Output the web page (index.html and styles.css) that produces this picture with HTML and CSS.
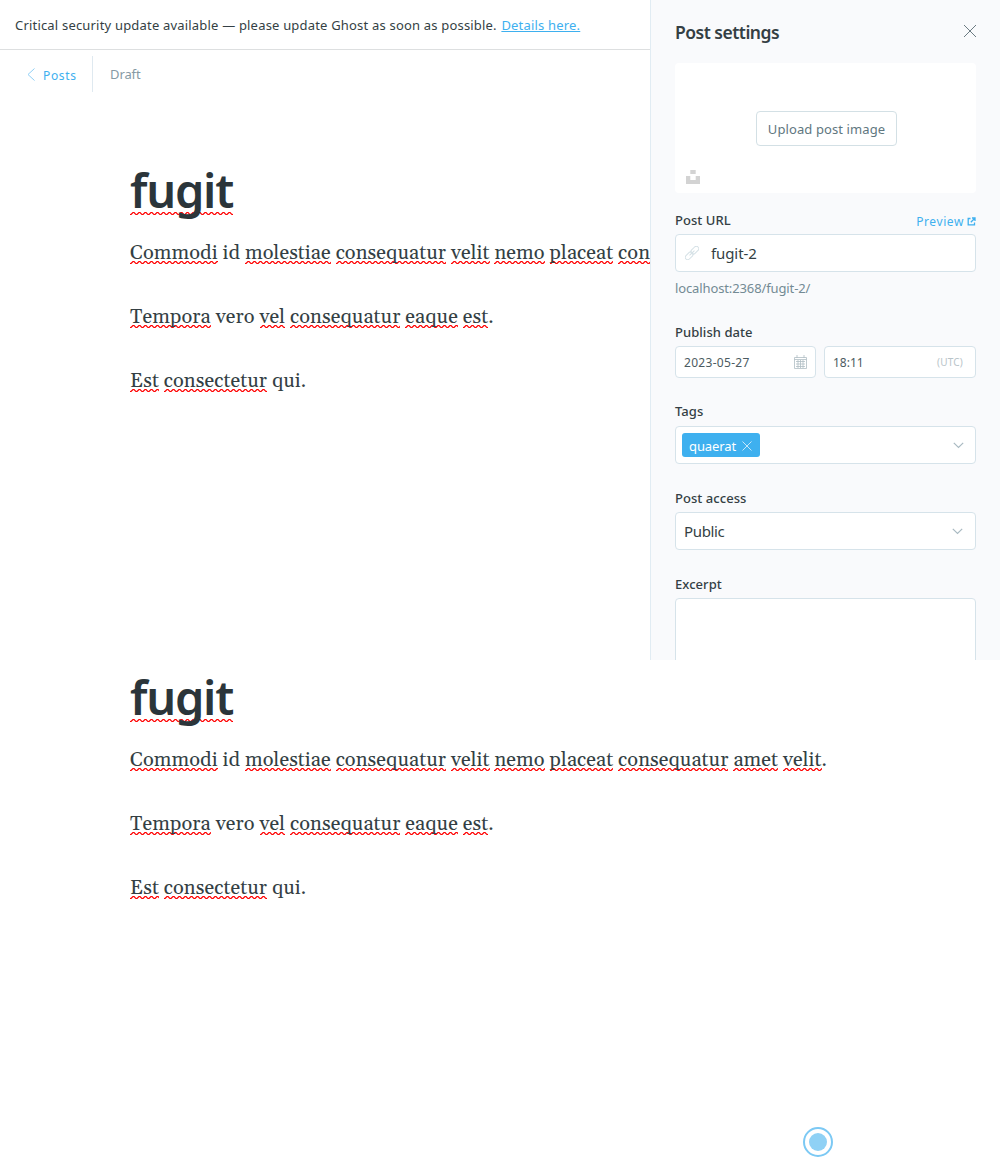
FILE: index.html
```html
<!DOCTYPE html>
<html lang="en">
<head>
<meta charset="utf-8">
<title>Post settings</title>
<link rel="stylesheet" href="styles.css">
</head>
<body>
<div class="screen">
  <main class="workspace">
    <div class="alert"><span class="alert-text">Critical security update available — please update Ghost as soon as possible. </span><a class="alert-link">Details here.</a></div>
    <header class="toolbar">
      <a class="back"><svg class="back-icon" width="8" height="13" viewBox="0 0 8 13"><path d="M7.500.5 1 6.500l6.500 6"/></svg><span class="back-text">Posts</span></a>
      <span class="status"><span class="status-text">Draft</span></span>
    </header>
    <article class="post">
      <h1 class="title"><span class="sp">fugit</span></h1>
      <p class="para"><span class="sp">Commodi</span> id <span class="sp">molestiae</span> <span class="sp">consequatur</span> <span class="sp">velit</span> <span class="sp">nemo</span> <span class="sp">placeat</span> <span class="sp">con</span></p>
      <p class="para"><span class="sp">Tempora</span> vero <span class="sp">vel</span> <span class="sp">consequatur</span> <span class="sp">eaque</span> <span class="sp">est</span>.</p>
      <p class="para"><span class="sp">Est</span> <span class="sp">consectetur</span> qui.</p>
    </article>
  </main>
  <aside class="settings">
    <header class="settings-head"><h2 class="settings-title">Post settings</h2><svg class="close" width="14" height="14" viewBox="0 0 14 14"><path d="m1 1 12 12M13 1 1 13"/></svg></header>
    <div class="uploader">
      <button class="upload-btn"><span class="upload-text">Upload post image</span></button>
      <svg class="unsplash" width="14" height="14" viewBox="0 0 14 14"><path d="M4.300 0h5.400v4H4.300zM0 6h4.300v4h5.400V6H14v8H0z"/></svg>
    </div>
    <div class="label-row"><label class="label">Post URL</label><a class="preview"><span class="preview-text">Preview</span><svg width="9" height="9" viewBox="0 0 9 9"><path d="M3.500 1.500H1.200v6.300h6.300V5.500M5 1h3v3M7.800 1.200 3.800 5.200"/></svg></a></div>
    <div class="box url-box"><svg class="link-icon" width="14" height="14" viewBox="0 0 14 14"><g transform="rotate(-45 7 7)"><rect x="-1.500" y="4.600" width="9" height="4.800" rx="2.400"/><rect x="6.500" y="4.600" width="9" height="4.800" rx="2.400"/><path d="M3.500 7h7"/></g></svg><span class="url-text">fugit-2</span></div>
    <p class="hint"><span class="hint-text">localhost:2368/fugit-2/</span></p>
    <label class="label">Publish date</label>
    <div class="date-row">
      <div class="box date-box"><span class="date-text">2023-05-27</span><svg class="cal" width="13" height="14" viewBox="0 0 13 14"><path d="M.5 2.500h12v11H.5zM.5 4.500h12M2 6.500h9M2 9h9M2 11.500h9M4 5v8M6.500 5v8M9 5v8M3 0v3M10 0v3"/></svg></div>
      <div class="box time-box"><span class="time-text">18:11</span><span class="utc">(UTC)</span></div>
    </div>
    <label class="label tags-label">Tags</label>
    <div class="box tags-box"><span class="tag"><span class="tag-text">quaerat</span><svg width="10" height="10" viewBox="0 0 10 10"><path d="m.5.5 9 9M9.500.5l-9 9"/></svg></span><svg class="chev" width="11" height="7" viewBox="0 0 11 7"><path d="m.8.8 4.700 4.700L10.200.8"/></svg></div>
    <label class="label">Post access</label>
    <div class="box access-box"><span class="access-text">Public</span><svg class="chev" width="11" height="7" viewBox="0 0 11 7"><path d="m.8.8 4.700 4.700L10.200.8"/></svg></div>
    <label class="label">Excerpt</label>
    <div class="box excerpt"></div>
  </aside>
</div>
<section class="overflow">
  <article class="post-rest">
    <h1 class="title"><span class="sp">fugit</span></h1>
    <p class="para"><span class="sp">Commodi</span> id <span class="sp">molestiae</span> <span class="sp">consequatur</span> <span class="sp">velit</span> <span class="sp">nemo</span> <span class="sp">placeat</span> <span class="sp">consequatur</span> <span class="sp">amet</span> <span class="sp">velit</span>.</p>
    <p class="para"><span class="sp">Tempora</span> vero <span class="sp">vel</span> <span class="sp">consequatur</span> <span class="sp">eaque</span> <span class="sp">est</span>.</p>
    <p class="para"><span class="sp">Est</span> <span class="sp">consectetur</span> qui.</p>
  </article>
  <svg class="beacon" width="30" height="30" viewBox="0 0 30 30"><circle class="ring" cx="15" cy="15" r="14"/><circle class="dot" cx="15" cy="15" r="9"/></svg>
</section>
</body>
</html>
```
FILE: styles.css
```css
* { box-sizing: border-box; }
body { margin: 0; background: #fff; color: #343f44; font-family: "Noto Sans", "Open Sans", sans-serif; }
svg { display: block; flex: none; fill: none; }
h1, h2, p { margin: 0; }
.screen { display: flex; height: 660px; overflow: hidden; }
.workspace { width: 650px; overflow: hidden; }
.alert { display: flex; align-items: center; height: 50px; padding: 0 15px; border-bottom: 1px solid #dddfe0; font-size: 13px; letter-spacing: .19px; white-space: pre; }
.alert-text { margin-right: 1px; }
.alert-link { color: #3eb0ef; text-decoration: underline; }
.toolbar { display: flex; height: 50px; padding: 6px 0 8px 27px; }
.back { display: flex; align-items: center; width: 66px; gap: 8px; border-right: 1px solid #dfe9f0; color: #3eb0ef; font-size: 12px; letter-spacing: .65px; }
.back-text { padding-top: 2px; }
.back-icon { stroke: #8fcff5; }
.status { display: flex; align-items: center; padding-left: 17px; color: #869aa5; font-size: 13px; letter-spacing: -.1px; }
.post { padding: 64px 0 0 130px; }
.title { height: 57px; line-height: 52px; font-size: 47px; font-weight: 600; letter-spacing: -1.25px; color: #2b353a; white-space: nowrap; }
.para { height: 64px; line-height: 64px; font-family: Gelasio, Georgia, "Liberation Serif", serif; font-size: 20px; letter-spacing: .09px; white-space: nowrap; }
.sp { display: inline-block; line-height: 22px; background: url("data:image/svg+xml,%3Csvg xmlns='http://www.w3.org/2000/svg' width='6' height='3'%3E%3Cpath d='M-1 1.500 0 2.500H1L3 .5H4L6 2.500H7' fill='none' stroke='red' stroke-width='1.200'/%3E%3C/svg%3E") left bottom repeat-x; }
.title .sp { line-height: 50px; }
.settings { width: 350px; padding: 0 24px; border-left: 1px solid #e1ecf3; background: #f9fafc; }
.settings-head { display: flex; justify-content: space-between; height: 63px; padding-top: 20px; }
.settings-title { font-size: 17.500px; line-height: 25px; font-weight: 600; letter-spacing: -.5px; }
.close { margin-top: 4px; margin-right: -1px; stroke: #6b7b82; }
.uploader { display: flex; align-items: center; justify-content: center; position: relative; height: 130px; border-radius: 4px; background: #fff; }
.upload-btn { height: 35px; width: 141px; margin-left: 2px; padding: 1px 0 0; border: 1px solid #d3e0e5; border-radius: 4px; background: #fff; color: #5f7780; font: 13px "Noto Sans", sans-serif; letter-spacing: .1px; white-space: nowrap; }
.unsplash { position: absolute; left: 11px; bottom: 9px; fill: #d3d3d3; }
.label-row { display: flex; justify-content: space-between; height: 41px; padding-top: 18px; }
.label { display: block; font-size: 13px; line-height: 18px; font-weight: 500; letter-spacing: .05px; }
.tags-label { margin-top: -1px; padding-bottom: 1px; line-height: 18px; }
.preview { display: flex; align-items: center; gap: 3px; height: 20px; color: #3eb0ef; font-size: 12px; letter-spacing: .6px; }
.preview svg { stroke: #3eb0ef; stroke-width: 1.300; }
.box { display: flex; align-items: center; height: 38px; border: 1px solid #d6e3ea; border-radius: 4px; background: #fff; }
.url-box { padding-left: 9px; gap: 12px; font-size: 15px; letter-spacing: -.1px; }
.link-icon { stroke: #d5e1e6; }
.hint { height: 51px; line-height: 33px; font-size: 13px; letter-spacing: -.12px; color: #738a94; }
.date-row { display: flex; gap: 8px; margin-top: 5px; margin-bottom: 25px; }
.date-box, .time-box { height: 32px; justify-content: space-between; padding: 0 8px; font-size: 12px; color: #4c5b61; }
.date-box { width: 141px; letter-spacing: .3px; }
.time-box { width: 152px; padding-right: 12px; }
.cal { stroke: #b0bec4; stroke-width: .8; }
.utc { font-size: 10px; letter-spacing: .2px; color: #b8c4c9; }
.tags-box { margin: 5px 0 25px; justify-content: space-between; padding: 0 11px 0 6px; }
.tag { display: flex; align-items: center; justify-content: space-between; width: 78px; height: 24px; padding: 2px 8px 0 7px; border-radius: 3px; background: #3eb0ef; color: #fff; font-size: 13px; letter-spacing: -.1px; }
.tag svg { stroke: #c5e6fa; }
.chev { stroke: #a9bac2; stroke-width: 1.200; }
.access-box { margin: 5px 0 25px; justify-content: space-between; padding: 0 12px 0 8px; font-size: 15px; letter-spacing: -.35px; }
.excerpt { height: 90px; margin-top: 5px; }
.overflow { position: relative; height: 507px; overflow: hidden; }
.post-rest { padding: 11px 0 0 130px; }
.beacon { position: absolute; left: 803px; top: 467px; }
.ring { stroke: #7cc9f4; stroke-width: 2; }
.dot { fill: #8fd1f5; }
```
